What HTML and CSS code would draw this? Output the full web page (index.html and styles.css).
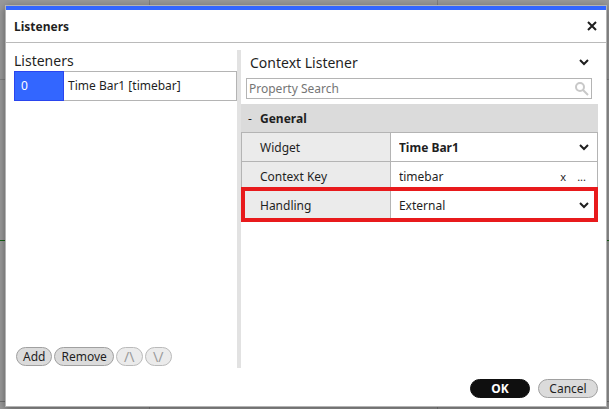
FILE: index.html
```html
<!DOCTYPE html>
<html lang="en">
<head>
  <meta charset="UTF-8" />
  <meta name="viewport" content="width=device-width, initial-scale=1.0"/>
  <title>Listeners</title>
  <link rel="stylesheet" href="styles.css">
</head>
<body>

  <div class="dialog" role="dialog" aria-labelledby="dialogTitle">
    <header class="dialog-header">
      <h1 id="dialogTitle">Listeners</h1>
      <button class="close" aria-label="Close">
        <svg width="10" height="10" viewBox="0 0 10 10"><path d="M1 1L9 9M9 1L1 9" /></svg>
      </button>
    </header>

    <div class="dialog-body">
      <section class="list-pane">
        <h2>Listeners</h2>
        <div class="listener">
          <span class="listener-index">0</span>
          <span class="listener-name">Time Bar1 [timebar]</span>
        </div>
        <div class="list-buttons">
          <button class="pill">Add</button>
          <button class="pill">Remove</button>
          <button class="pill" disabled>/\</button>
          <button class="pill" disabled>\/</button>
        </div>
      </section>

      <section class="property-pane">
        <div class="property-title">
          <h2>Context Listener</h2>
          <button class="toggle" aria-label="Toggle properties">
            <svg class="chevron" width="10" height="7" viewBox="0 0 10 7"><path d="M1 1L5 5L9 1" /></svg>
          </button>
        </div>
        <div class="search">
          <input type="text" placeholder="Property Search" aria-label="Property Search">
          <svg width="14" height="14" viewBox="0 0 14 14"><circle cx="5" cy="5" r="4" /><path d="M8 8L13 13" /></svg>
        </div>
        <table class="properties">
          <thead>
            <tr>
              <th class="group"><span class="collapse">-</span>General</th>
              <th></th>
            </tr>
          </thead>
          <tbody>
            <tr>
              <td class="name"><label for="widget">Widget</label></td>
              <td>
                <div class="value">
                  <select id="widget" class="changed"><option>Time Bar1</option></select>
                  <svg class="chevron" width="10" height="7" viewBox="0 0 10 7"><path d="M1 1L5 5L9 1" /></svg>
                </div>
              </td>
            </tr>
            <tr>
              <td class="name"><label for="contextKey">Context Key</label></td>
              <td>
                <div class="value">
                  <input id="contextKey" type="text" value="timebar">
                  <button class="small" aria-label="Clear">x</button>
                  <button class="small" aria-label="More">...</button>
                </div>
              </td>
            </tr>
            <tr class="highlight">
              <td class="name"><label for="handling">Handling</label></td>
              <td>
                <div class="value">
                  <select id="handling"><option>External</option></select>
                  <svg class="chevron" width="10" height="7" viewBox="0 0 10 7"><path d="M1 1L5 5L9 1" /></svg>
                </div>
              </td>
            </tr>
          </tbody>
        </table>
      </section>
    </div>

    <footer class="dialog-footer">
      <button class="pill primary">OK</button>
      <button class="pill cancel">Cancel</button>
    </footer>
  </div>

</body>
</html>
```
FILE: styles.css
```css
* {
  box-sizing: border-box;
}
body {
  margin: 0;
  min-height: 100vh;
  padding: 5px 2px 2px 5px;
  display: flex;
  font-family: "Noto Sans", "Open Sans", sans-serif;
  font-size: 12px;
  color: #1f1f1f;
  /* design canvas behind the dialog: green axis and grey grid lines */
  background:
    linear-gradient(#146414, #146414) 0 240px / 100% 1px no-repeat,
    linear-gradient(#808080, #808080) 0 79px / 100% 1px no-repeat,
    linear-gradient(#707070, #707070) 0 401px / 100% 1px no-repeat,
    linear-gradient(#808080, #808080) 149px 0 / 1px 100% no-repeat,
    linear-gradient(#808080, #808080) 437px 0 / 1px 100% no-repeat,
    #999;
}
h1, h2 {
  margin: 0;
}
button, input, select {
  font: inherit;
  color: inherit;
}
button {
  padding: 0;
  border: none;
  background: none;
  cursor: pointer;
}
svg {
  flex: none;
  fill: none;
  stroke: #1f1f1f;
  stroke-width: 2;
}
.dialog {
  flex: 1;
  display: flex;
  flex-direction: column;
  background: white;
  border: 1px solid #b4b4b4;
  box-shadow: 0 2px 8px rgba(0, 0, 0, 0.4);
}
.dialog-header {
  display: flex;
  justify-content: space-between;
  align-items: center;
  height: 37px;
  padding: 0 9px 0 8px;
  border-top: 4px solid #3366ff;
  border-bottom: 1px solid #bababa;
}
.dialog-header h1 {
  font-size: 12px;
}
.close, .toggle {
  display: flex;
}
.dialog-body {
  flex: 1;
  display: flex;
  margin: 7px 8px 0;
}
h2 {
  font-size: 14px;
  line-height: 21px;
  font-weight: normal;
}
.list-pane {
  flex: 0 0 223px;
  display: flex;
  flex-direction: column;
}
.listener {
  display: flex;
  height: 30px;
  line-height: 28px;
  border: 1px solid #b4b4b4;
}
.listener-index {
  width: 50px;
  margin: -1px 0 -1px -1px;
  padding-left: 6px;
  color: white;
  background: #3366ff;
  border: 1px solid #2a45ee;
}
.listener-name {
  padding-left: 4px;
}
.list-buttons {
  display: flex;
  gap: 2px;
  margin-top: auto;
  padding: 0 0 2px 2px;
}
.pill {
  height: 19px;
  padding: 0 6px;
  line-height: 17px;
  background: #dbdbdb;
  border: 1px solid #a0a0a0;
  border-radius: 10px;
}
.pill:disabled {
  width: 27px;
  font-size: 14px;
  color: #9a9a9a;
  background: #ebebeb;
  border-color: #bababa;
}
.property-pane {
  flex: 1;
  border-left: 4px solid #e2e2e2;
}
.property-title {
  display: flex;
  justify-content: space-between;
  align-items: center;
  height: 25px;
  margin-bottom: 3px;
  padding: 0 9px;
}
.search {
  display: flex;
  align-items: center;
  height: 21px;
  margin: 0 6px 5px 5px;
  padding: 0 2px;
  border: 1px solid #b4b4b4;
}
.search input {
  flex: 1;
  min-width: 0;
  padding: 0;
  border: none;
  outline: none;
}
.search input::placeholder {
  color: #757575;
}
.search svg {
  stroke: #c8c8c8;
}
.properties {
  width: 100%;
  table-layout: fixed;
  border-collapse: separate;
  border-spacing: 0;
}
.properties th {
  height: 28px;
  padding: 0;
  text-align: left;
  background: #dbdbdb;
}
.properties .group {
  width: 42%;
}
.collapse {
  display: inline-block;
  width: 19px;
  padding-left: 7px;
  font-weight: normal;
}
.properties td {
  height: 29px;
  padding: 0;
  border-top: 1px solid #b4b4b4;
  border-right: 1px solid #b4b4b4;
}
.properties .name {
  padding-left: 18px;
  background: #ebebeb;
  border-left: 1px solid #b4b4b4;
}
.value {
  display: flex;
  align-items: center;
  padding: 0 8px;
}
.value select, .value input {
  flex: 1;
  min-width: 0;
  padding: 0;
  border: none;
  outline: none;
  background: none;
  appearance: none;
}
.value .changed {
  font-weight: bold;
}
.small {
  margin: 0 3px 0 8px;
  font-size: 11px;
}
.highlight {
  position: relative;
}
/* red frame round the whole row, over the borders of its neighbours */
.highlight .name::after {
  content: "";
  position: absolute;
  inset: -3px 0;
  border: 4px solid #e81a1c;
  pointer-events: none;
}
.dialog-footer {
  display: flex;
  justify-content: flex-end;
  gap: 8px;
  padding: 11px 8px 8px;
}
.dialog-footer .pill {
  width: 60px;
}
.pill.primary {
  color: white;
  font-weight: bold;
  background: #0f0f0f;
  border-color: #0f0f0f;
}
```
